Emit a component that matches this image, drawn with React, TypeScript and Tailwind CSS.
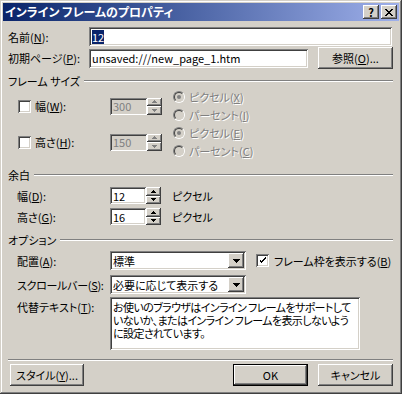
import type { ReactNode } from "react";

const raised =
  "shadow-[inset_-1px_-1px_#404040,inset_1px_1px_#ffffff,inset_-2px_-2px_#808080,inset_2px_2px_#d4d0c8]";
const sunken =
  "shadow-[inset_1px_1px_#808080,inset_-1px_-1px_#ffffff,inset_2px_2px_#404040,inset_-2px_-2px_#d4d0c8]";
const dim = "text-[#808080] [text-shadow:1px_1px_0_#ffffff]";

function U({ children }: { children: ReactNode }) {
  return <span className="underline underline-offset-[1px]">{children}</span>;
}

function Etched() {
  return <div className="h-[2px] border-t border-b border-t-[#808080] border-b-white" />;
}

function GroupHeader({ title }: { title: string }) {
  return (
    <div className="flex h-[14px] items-center">
      <span className="whitespace-nowrap">{title}</span>
      <div className="ml-[4px] flex-1">
        <Etched />
      </div>
    </div>
  );
}

function Arrow({ up, disabled }: { up?: boolean; disabled?: boolean }) {
  const fill = disabled ? "#808080" : "#000000";
  return (
    <svg width="5" height="3" viewBox="0 0 5 3" shapeRendering="crispEdges">
      {up ? (
        <>
          <rect x="2" y="0" width="1" height="1" fill={fill} />
          <rect x="1" y="1" width="3" height="1" fill={fill} />
          <rect x="0" y="2" width="5" height="1" fill={fill} />
        </>
      ) : (
        <>
          <rect x="0" y="0" width="5" height="1" fill={fill} />
          <rect x="1" y="1" width="3" height="1" fill={fill} />
          <rect x="2" y="2" width="1" height="1" fill={fill} />
        </>
      )}
    </svg>
  );
}

function Spinner({ disabled }: { disabled?: boolean }) {
  return (
    <div className="flex h-[17px] w-[15px] flex-col">
      <div className={`flex flex-1 items-center justify-center bg-[#d4d0c8] ${raised}`}>
        <Arrow up disabled={disabled} />
      </div>
      <div className={`flex flex-1 items-center justify-center bg-[#d4d0c8] ${raised}`}>
        <Arrow disabled={disabled} />
      </div>
    </div>
  );
}

function Field({
  value,
  disabled,
  className,
}: {
  value: ReactNode;
  disabled?: boolean;
  className: string;
}) {
  return (
    <div
      className={`flex items-center overflow-hidden whitespace-nowrap pl-[3px] ${sunken} ${
        disabled ? "bg-[#d4d0c8] text-[#808080]" : "bg-white"
      } ${className}`}
    >
      {value}
    </div>
  );
}

function Check({ checked }: { checked?: boolean }) {
  return (
    <div className={`flex h-[13px] w-[13px] shrink-0 items-center justify-center bg-white ${sunken}`}>
      {checked && (
        <svg width="7" height="7" viewBox="0 0 7 7" shapeRendering="crispEdges">
          <path d="M0 2h1v3h1v1h1v-1h1v-1h1v-1h1v-1h1v-2h-1v1h-1v1h-1v1h-1v1h-1v-1h-1v-2z" fill="#000" />
        </svg>
      )}
    </div>
  );
}

function Radio({ checked }: { checked?: boolean }) {
  return (
    <div className="h-[12px] w-[12px] shrink-0 rounded-full border border-t-[#808080] border-l-[#808080] border-r-white border-b-white">
      <div className="flex h-full w-full items-center justify-center rounded-full border border-t-[#404040] border-l-[#404040] border-r-[#d4d0c8] border-b-[#d4d0c8] bg-[#d4d0c8]">
        {checked && <div className="h-[4px] w-[4px] rounded-full bg-[#808080]" />}
      </div>
    </div>
  );
}

function RadioRow({ children, checked }: { children: ReactNode; checked?: boolean }) {
  return (
    <div className="flex h-[18px] items-center">
      <Radio checked={checked} />
      <span className={`ml-[4px] whitespace-nowrap ${dim}`}>{children}</span>
    </div>
  );
}

function Select({ value }: { value: string }) {
  return (
    <div className={`flex h-[19px] w-[136px] shrink-0 items-center bg-white p-[2px] ${sunken}`}>
      <span className="flex-1 whitespace-nowrap pl-[1px]">{value}</span>
      <div className={`flex h-[15px] w-[16px] items-center justify-center bg-[#d4d0c8] ${raised}`}>
        <svg width="7" height="4" viewBox="0 0 7 4" shapeRendering="crispEdges">
          <path d="M0 0h7v1h-1v1h-1v1h-1v1h-1v-1h-1v-1h-1v-1h-1z" fill="#000" />
        </svg>
      </div>
    </div>
  );
}

function PushButton({
  children,
  className,
  isDefault,
}: {
  children: ReactNode;
  className: string;
  isDefault?: boolean;
}) {
  if (isDefault) {
    return (
      <div className={`border border-black ${className}`}>
        <div className={`flex h-full w-full items-center justify-center bg-[#d4d0c8] ${raised}`}>
          {children}
        </div>
      </div>
    );
  }
  return (
    <div className={`flex items-center justify-center bg-[#d4d0c8] ${raised} ${className}`}>
      {children}
    </div>
  );
}

function SizeRow({ label, mn, value, first, second }: { label: string; mn: string; value: string; first: ReactNode; second: ReactNode }) {
  return (
    <div className="flex h-[36px] items-center pl-[10px]">
      <Check />
      <span className="ml-[4px] w-[75px] whitespace-nowrap">
        {label}(<U>{mn}</U>):
      </span>
      <Field value={value} disabled className="h-[17px] w-[37px]" />
      <Spinner disabled />
      <div className="ml-[11px] flex flex-col">
        <RadioRow checked>{first}</RadioRow>
        <RadioRow>{second}</RadioRow>
      </div>
    </div>
  );
}

function MarginRow({ label, mn, value }: { label: string; mn: string; value: string }) {
  return (
    <div className="flex h-[17px] items-center pl-[9px]">
      <span className="w-[93px] whitespace-nowrap">
        {label}(<U>{mn}</U>):
      </span>
      <Field value={value} className="h-[17px] w-[36px]" />
      <Spinner />
      <span className="ml-[11px]">ピクセル</span>
    </div>
  );
}

export default function App() {
  return (
    <div className="flex h-[394px] w-[402px] flex-col bg-[#d4d0c8] p-[3px] font-['Noto_Sans_CJK_JP',sans-serif] text-[11px] leading-[14px] text-black [font-feature-settings:'palt'] shadow-[inset_-1px_-1px_#404040,inset_1px_1px_#d4d0c8,inset_-2px_-2px_#808080,inset_2px_2px_#ffffff]">
      {/* title bar */}
      <div className="flex h-[18px] items-center bg-linear-to-r from-[#0a246a] to-[#9fb0ea] pl-[2px] pr-[2px]">
        <span className="flex-1 whitespace-nowrap text-[12px] font-bold text-white">インライン フレームのプロパティ</span>
        <div className={`flex h-[14px] w-[16px] items-center justify-center bg-[#d4d0c8] text-[11px] font-bold leading-none ${raised}`}>
          ?
        </div>
        <div className={`ml-[2px] flex h-[14px] w-[16px] items-center justify-center bg-[#d4d0c8] ${raised}`}>
          <svg width="8" height="7" viewBox="0 0 8 7" shapeRendering="crispEdges">
            <path d="M0 0h2v1h1v1h2v-1h1v-1h2v1h-1v1h-1v1h-1v1h1v1h1v1h1v1h-2v-1h-1v-1h-2v1h-1v1h-2v-1h1v-1h1v-1h1v-1h-1v-1h-1v-1h-1z" fill="#000" />
          </svg>
        </div>
      </div>

      <div className="flex flex-1 flex-col pl-[5px] pr-[6px]">
        <div className="mt-[6px] flex h-[19px] items-center">
          <span className="w-[81px] whitespace-nowrap">
            名前(<U>N</U>):
          </span>
          <Field
            value={<span className="bg-[#0a246a] text-white">12</span>}
            className="mr-[1px] h-[19px] flex-1"
          />
        </div>

        <div className="mt-[1px] flex h-[22px] items-center">
          <span className="w-[81px] whitespace-nowrap">
            初期ページ(<U>P</U>):
          </span>
          <Field value="unsaved:///new_page_1.htm" className="h-[19px] w-[219px]" />
          <PushButton className="ml-auto h-[22px] w-[75px]">
            参照(<U>O</U>)...
          </PushButton>
        </div>

        <div className="mt-[5px]">
          <GroupHeader title="フレーム サイズ" />
        </div>
        <SizeRow
          label="幅"
          mn="W"
          value="300"
          first={<>ピクセル(<U>X</U>)</>}
          second={<>パーセント(<U>I</U>)</>}
        />
        <SizeRow
          label="高さ"
          mn="H"
          value="150"
          first={<>ピクセル(<U>E</U>)</>}
          second={<>パーセント(<U>C</U>)</>}
        />

        <div className="mt-[8px]">
          <GroupHeader title="余白" />
        </div>
        <div className="mt-[5px]">
          <MarginRow label="幅" mn="D" value="12" />
        </div>
        <div className="mt-[4px]">
          <MarginRow label="高さ" mn="G" value="16" />
        </div>

        <div className="mt-[8px]">
          <GroupHeader title="オプション" />
        </div>
        <div className="mt-[4px] flex h-[19px] items-center pl-[9px]">
          <span className="w-[93px] whitespace-nowrap">
            配置(<U>A</U>):
          </span>
          <Select value="標準" />
          <div className="ml-[10px]">
            <Check checked />
          </div>
          <span className="ml-[5px] whitespace-nowrap">
            フレーム枠を表示する(<U>B</U>)
          </span>
        </div>
        <div className="mt-[5px] flex h-[19px] items-center pl-[9px]">
          <span className="w-[93px] shrink-0 whitespace-nowrap tracking-[-0.3px]">
            スクロールバー(<U>S</U>):
          </span>
          <Select value="必要に応じて表示する" />
        </div>
        <div className="mt-[3px] flex items-start pl-[9px]">
          <span className="w-[93px] shrink-0 whitespace-nowrap pt-[3px]">
            代替テキスト(<U>T</U>):
          </span>
          <div className={`h-[53px] w-[250px] overflow-hidden bg-white px-[3px] pt-[4px] leading-[13px] tracking-[-0.6px] whitespace-nowrap ${sunken}`}>
            お使いのブラウザはインライン フレームをサポートして
            <br />
            いないか、またはインライン フレームを表示しないよう
            <br />
            に設定されています。
          </div>
        </div>

        <div className="mt-[9px]">
          <Etched />
        </div>

        <div className="mt-[3px] flex h-[22px] items-center">
          <PushButton className="ml-[2px] h-[22px] w-[74px]">
            スタイル(<U>Y</U>)...
          </PushButton>
          <PushButton isDefault className="ml-auto h-[22px] w-[75px]">
            OK
          </PushButton>
          <PushButton className="ml-[10px] h-[22px] w-[75px]">
            キャンセル
          </PushButton>
        </div>
      </div>
    </div>
  );
}
